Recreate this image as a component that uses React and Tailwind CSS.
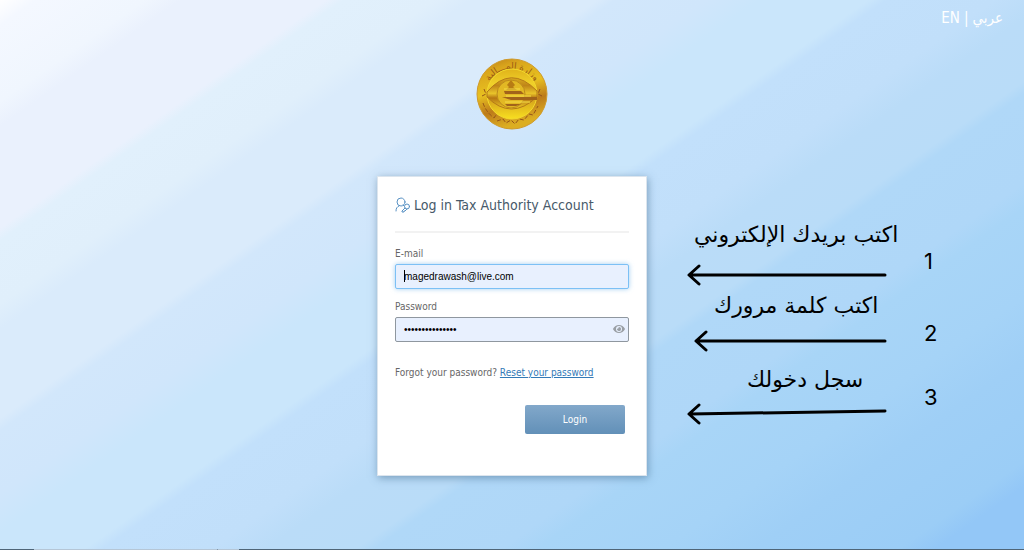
import { FaEye } from 'react-icons/fa'

const steps = [
  { number: 1, text: 'اكتب بريدك الإلكتروني', arrow: 'M199 14H4M13 5 3 14l10 9', row: 'left-[39px] top-[85px]', label: 'left-[47px] top-[45px]', digit: 'top-[71px]' },
  { number: 2, text: 'اكتب كلمة مرورك', arrow: 'M199 14H11M20 5 10 14l10 9', row: 'left-[39px] top-[151px]', label: 'left-[67px] top-[116px]', digit: 'top-[143px]' },
  { number: 3, text: 'سجل دخولك', arrow: 'M199 12 4 15M13 6 3 15l10 9', row: 'left-[39px] top-[223px]', label: 'left-[100px] top-[190px]', digit: 'top-[207px]' },
]

function Seal() {
  return (
    <svg viewBox="0 0 72 72" className="h-[72px] w-[72px]" role="img" aria-label="Tax Authority">
      <defs>
        <linearGradient id="rim" x1="0" y1="0" x2="0.3" y2="1">
          <stop offset="0" stopColor="#b87a18" />
          <stop offset="0.2" stopColor="#d9a51c" />
          <stop offset="0.5" stopColor="#e8c020" />
          <stop offset="0.75" stopColor="#bd7b1a" />
          <stop offset="1" stopColor="#dcae22" />
        </linearGradient>
        <linearGradient id="disc" x1="0" y1="0" x2="0" y2="1">
          <stop offset="0" stopColor="#e0b31a" />
          <stop offset="0.3" stopColor="#f0d12a" />
          <stop offset="0.65" stopColor="#d9a91c" />
          <stop offset="1" stopColor="#f8e020" />
        </linearGradient>
        <linearGradient id="eye" x1="0" y1="0" x2="0" y2="1">
          <stop offset="0" stopColor="#d9ab20" />
          <stop offset="0.25" stopColor="#c08518" />
          <stop offset="0.5" stopColor="#e9c42a" />
          <stop offset="0.65" stopColor="#b67613" />
          <stop offset="1" stopColor="#eccb28" />
        </linearGradient>
        <path id="upper" d="M10 45A27 27 0 1 1 62 45" />
      </defs>
      <circle cx="36" cy="36" r="35" fill="url(#rim)" stroke="#cf9a2c" />
      <text fill="#9a5c14" fontSize="9" fontFamily="Noto Sans, DejaVu Sans, sans-serif" textAnchor="middle">
        <textPath href="#upper" startOffset="50%">وزارة المـــالية</textPath>
      </text>
      <path d="M7 45q3 9 11 15l2-3M21 63l6-2 3 4 5-3 4 4 4-5 5 1 5-6 4 1 5-9M6 38l4-2-2-5M66 38l-4-2 2-5" fill="none" stroke="#95541a" strokeDasharray="4 2" />
      <circle cx="36" cy="36" r="25" fill="url(#disc)" stroke="#f3d92d" />
      <path d="M11 34Q35 6 61 33v6Q35 63 11 39Z" fill="url(#eye)" stroke="#b57a18" />
      <circle cx="35" cy="36" r="14" fill="#e2b824" stroke="#bd8a1c" />
      <path d="m35 22 4 5-2 2 4 3H30l3-3-2-2Z" fill="#b87c14" />
      <path d="M28 33h17l3 3H29ZM26 39h35v3H35ZM29 46h16l-5 2H31Z" fill="#a1631a" />
      <path d="M28 31h16M30 38h25M29 44h25" stroke="#f6df48" />
    </svg>
  )
}

function UserKeyIcon() {
  return (
    <svg viewBox="0 0 16 16" className="h-4 w-4 shrink-0" fill="none" stroke="#5a92c4" strokeLinecap="round" strokeLinejoin="round" aria-hidden="true">
      <circle cx="6" cy="5" r="4" />
      <path d="M1 14c0-3 1-4 3-5M8 8l1 1" />
      <circle cx="12" cy="9.5" r="2.5" />
      <path d="m10 11-3 3v1h2v-1h1l2-2" />
    </svg>
  )
}

function Steps() {
  return (
    <ol className="absolute left-full top-0 text-black" aria-label="Login steps">
      {steps.map((step) => (
        <li key={step.number}>
          <span dir="rtl" lang="ar" className={`absolute whitespace-nowrap font-['DejaVu_Sans',sans-serif] text-[22px] leading-7 ${step.label}`}>{step.text}</span>
          <svg viewBox="0 0 202 28" className={`absolute h-7 w-[202px] ${step.row}`} fill="none" stroke="black" strokeWidth="3" strokeLinecap="round" strokeLinejoin="round" aria-hidden="true">
            <path d={step.arrow} />
          </svg>
          <span className={`absolute left-[277px] font-[Inter] text-[22px] leading-7 ${step.digit}`}>{step.number}</span>
        </li>
      ))}
    </ol>
  )
}

function LoginCard() {
  return (
    <form className="min-h-[300px] w-[270px] border border-[#dce5ee] bg-white px-[17px] pt-4 shadow-[1px_2px_8px_rgba(55,95,130,0.5)]" onSubmit={(e) => e.preventDefault()}>
      <h1 className="flex h-10 items-start gap-[3px] border-b-2 border-[#f2f2f2] text-sm leading-6 text-[#475a6a]">
        <span className="pt-1"><UserKeyIcon /></span>
        Log in Tax Authority Account
      </h1>
      <label htmlFor="email" className="mt-[13px] block text-[10px] leading-4 text-[#666]">E-mail</label>
      <div className="relative mt-0.5">
        <input id="email" type="email" defaultValue="magedrawash@live.com" className="block h-[25px] w-full rounded-xs border border-[#7cc0f5] bg-[#e8f0fe] px-2 font-['Liberation_Sans',sans-serif] text-[10px] text-black shadow-[0_0_5px_rgba(102,175,233,0.6)] outline-none" />
        <span className="absolute left-[9px] top-1.5 h-3 w-px bg-black" />
      </div>
      <label htmlFor="password" className="mt-2.5 block text-[10px] leading-4 text-[#666]">Password</label>
      <div className="relative mt-0.5">
        <input id="password" type="password" defaultValue="123456789012345" className="block h-[25px] w-full rounded-xs border border-[#8f979f] bg-[#e8f0fe] px-2 font-['Liberation_Sans',sans-serif] text-[10px] text-black" />
        <button type="button" aria-label="Show password" className="absolute right-1 top-1.5 text-[#9a9fa5]"><FaEye size={12} /></button>
      </div>
      <p className="mt-[23px] text-[10px] leading-4 text-[#666]">
        Forgot your password? <a href="#reset" className="text-[#337ab7] underline">Reset your password</a>
      </p>
      <button type="submit" className="ml-auto mr-1 mt-6 block h-[29px] w-[100px] rounded-xs bg-linear-to-b from-[#82a8ca] to-[#6290b8] text-[10px] text-white">Login</button>
    </form>
  )
}

export default function App() {
  return (
    <main className="flex min-h-screen flex-col bg-[linear-gradient(145deg,#fff_0%,#f4f8ff_2%,#f0f6fe_8%,#eaf1fd_10%,#eaf1fd_18%,#e1f0fc_19%,#e0effb_24%,#daebfb_26%,#daebfb_33%,#d2e7fb_34%,#d0e6fb_39%,#cae6fb_42%,#cae6fb_48%,#c2e0fb_49%,#c1dffa_55%,#badcf8_58%,#b9dcf8_63%,#b0d8f8_64%,#afd7f8_71%,#a8d5f7_73%,#a5d3f7_80%,#9fcff6_85%,#9bcdf6_93%,#93c7f7_95%)] font-['DejaVu_Sans_Condensed','Noto_Sans',sans-serif]">
      <nav className="flex justify-end gap-1 px-[21px] pt-2 text-[15px] leading-5 text-white" aria-label="Language">
        <a href="#en">EN</a>|<a href="#ar" lang="ar">عربي</a>
      </nav>
      <div className="mt-[30px] flex justify-center"><Seal /></div>
      <div className="relative mx-auto mt-[46px]">
        <LoginCard />
        <Steps />
      </div>
      <div className="mt-auto flex h-px bg-[#4f6577]" aria-hidden="true">
        <span className="ml-[34px] w-[183px] bg-[#b5c6d6]" />
        <span className="w-px bg-[#8295a5]" />
        <span className="w-[21px] bg-[#b5c6d6]" />
      </div>
    </main>
  )
}
